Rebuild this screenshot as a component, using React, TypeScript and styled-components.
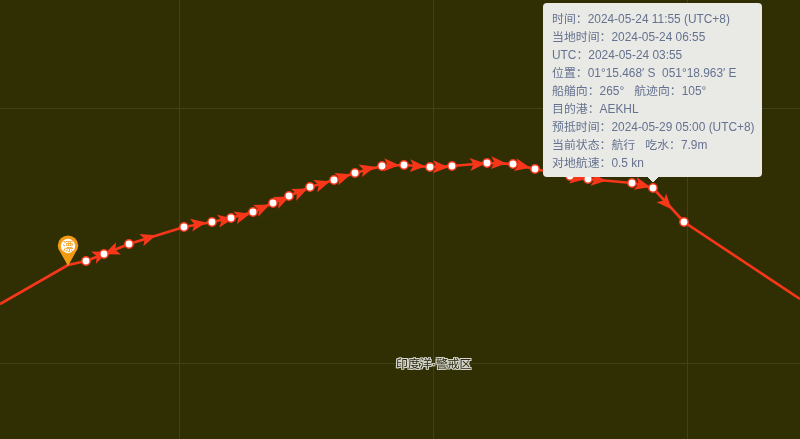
import React from 'react';
import styled, { createGlobalStyle } from 'styled-components';

const GlobalStyle = createGlobalStyle`
  html, body {
    margin: 0;
    padding: 0;
    background: #302f04;
  }
`;

const MapView = styled.div`
  position: relative;
  width: 800px;
  height: 439px;
  overflow: hidden;
  background: #302f04;
  font-family: 'Liberation Sans', 'Noto Sans CJK SC', sans-serif;
`;

const MapCanvas = styled.svg`
  position: absolute;
  inset: 0;
  display: block;
  filter: blur(0.3px);
`;

const SeaLabel = styled.div`
  position: absolute;
  left: 396px;
  top: 357px;
  font-size: 11.9px;
  line-height: 15px;
  color: #2a2a10;
  white-space: nowrap;
  filter: blur(0.3px);
  text-shadow: 1px 0 0 #d8d8d0, -1px 0 0 #d8d8d0, 0 1px 0 #d8d8d0, 0 -1px 0 #d8d8d0,
    1px 1px 0 #d8d8d0, -1px -1px 0 #d8d8d0, 1px -1px 0 #d8d8d0, -1px 1px 0 #d8d8d0;
`;

const Tooltip = styled.div`
  position: absolute;
  left: 543px;
  top: 3px;
  width: 219px;
  height: 174px;
  box-sizing: border-box;
  padding: 7px 0 0 9px;
  background: #e9e9e6;
  border-radius: 4px;
  color: #65728f;
  font-size: 11.9px;
  line-height: 18px;
  white-space: pre;
  filter: blur(0.25px);

  ::after {
    content: '';
    position: absolute;
    left: 105px;
    bottom: -5px;
    border-left: 5px solid transparent;
    border-right: 5px solid transparent;
    border-top: 5px solid #e9e9e6;
  }
`;

const Row = styled.div`
  display: flex;
`;

const Field = styled.span<{ $gap?: number }>`
  margin-left: ${({ $gap }) => $gap ?? 0}px;
`;

const track = [
  [0, 304], [68, 265], [86, 261], [104, 254], [129, 244], [184, 227], [212, 222], [231, 218],
  [253, 212], [273, 203], [289, 196], [310, 187], [334, 180], [355, 173], [382, 166], [404, 165],
  [430, 167], [452, 166], [487, 163], [513, 164], [535, 169], [570, 176], [588, 179], [632, 183],
  [653, 188], [684, 222], [800, 299],
];

// first and last track points have no dot, nor the pin position
const dots = track.slice(2, -1);

const arrows = [
  [100, 255, -22], [112, 251, 158], [148, 238, -18], [198, 224, -10], [225, 220, -10], [242, 216, -15],
  [262, 208, -24], [282, 200, -24], [300, 192, -24], [322, 184, -18], [343, 177, -18], [367, 169, -15],
  [391, 165, 2], [417, 166, 3], [440, 167, 2], [477, 164, -4], [498, 163, 3], [522, 166, 12],
  [577, 178, 8], [598, 180, 5], [642, 185, 13], [666, 203, 48],
];

const rows = [
  ['时间：2024-05-24 11:55 (UTC+8)'],
  ['当地时间：2024-05-24 06:55'],
  ['UTC：2024-05-24 03:55'],
  ['位置：01°15.468′ S  051°18.963′ E'],
  ['船艏向：265°', '航迹向：105°'],
  ['目的港：AEKHL'],
  ['预抵时间：2024-05-29 05:00 (UTC+8)'],
  ['当前状态：航行', '吃水：7.9m'],
  ['对地航速：0.5 kn'],
];

const App: React.FC = () => {
  return (
    <MapView>
      <GlobalStyle />
      <MapCanvas width={800} height={439} viewBox="0 0 800 439">
        <g stroke="#42421a" strokeWidth={1}>
          <line x1={179.5} y1={0} x2={179.5} y2={439} />
          <line x1={433.5} y1={0} x2={433.5} y2={439} />
          <line x1={687.5} y1={0} x2={687.5} y2={439} />
          <line x1={0} y1={108.5} x2={800} y2={108.5} />
          <line x1={0} y1={363.5} x2={800} y2={363.5} />
        </g>
        <polyline
          points={track.map(([x, y]) => `${x},${y}`).join(' ')}
          fill="none"
          stroke="#f8371a"
          strokeWidth={2.6}
        />
        {arrows.map(([x, y, angle]) => (
          <path
            key={`${x}-${y}`}
            d="M8.5 0 L-7 -6.5 L-3.5 0 L-7 6.5 Z"
            fill="#f8371a"
            transform={`translate(${x} ${y}) rotate(${angle})`}
          />
        ))}
        {dots.map(([x, y]) => (
          <circle key={`${x}-${y}`} cx={x} cy={y} r={4.2} fill="#fff" stroke="#f8371a" strokeWidth={1.5} />
        ))}
        <path d="M68 266 L60.5 252.5 A10.2 10.2 0 1 1 75.5 252.5 Z" fill="#f29a12" />
        <circle cx={68} cy={246} r={7.2} fill="#fff" />
        <text x={68} y={250.5} textAnchor="middle" fontSize={11} fill="#f29a12" fontFamily="'Noto Sans CJK SC', sans-serif">
          漂
        </text>
      </MapCanvas>
      <SeaLabel>印度洋·警戒区</SeaLabel>
      <Tooltip>
        {rows.map(([first, second]) => (
          <Row key={first}>
            <Field>{first}</Field>
            {second && <Field $gap={10}>{second}</Field>}
          </Row>
        ))}
      </Tooltip>
    </MapView>
  );
};

export default App;
